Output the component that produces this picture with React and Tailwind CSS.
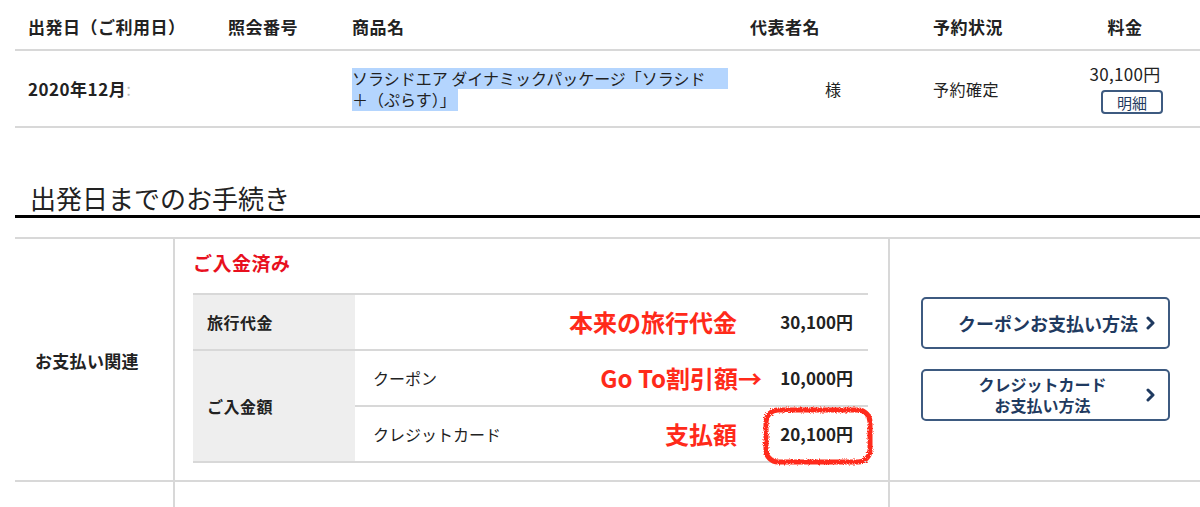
import React from 'react';

const font = { fontFamily: '"Noto Sans CJK JP", "Noto Sans", sans-serif' };

function Chevron() {
  return (
    <svg width="10" height="14" viewBox="0 0 10 14" className="shrink-0">
      <polyline points="2,2 7,7 2,12" fill="none" stroke="#1f3a60" strokeWidth="3" strokeLinecap="round" strokeLinejoin="round" />
    </svg>
  );
}

function Scribble() {
  return (
    <svg className="absolute left-[-3px] top-[-1px] pointer-events-none" width="112" height="60" viewBox="0 0 112 60">
      <defs>
        <filter id="rough">
          <feTurbulence type="fractalNoise" baseFrequency="1.2" numOctaves="3" result="n" />
          <feDisplacementMap in="SourceGraphic" in2="n" scale="4" />
        </filter>
      </defs>
      <rect x="4" y="4" width="104" height="52" rx="12" fill="none" stroke="#ff2a1a" strokeWidth="5" filter="url(#rough)" />
    </svg>
  );
}

export default function App() {
  return (
    <div className="w-[1200px] h-[507px] bg-white text-[#222] overflow-hidden" style={font}>
      {/* 予約一覧 */}
      <div className="ml-[15px]">
        <div className="flex items-center h-[51px] pt-[5px] border-b-2 border-[#d8d8d8] text-[17px] font-bold tracking-[0.5px]">
          <div className="w-[200px] pl-[13px]">出発日（ご利用日）</div>
          <div className="w-[124px] pl-[13px]">照会番号</div>
          <div className="w-[398px] pl-[13px]">商品名</div>
          <div className="w-[143px] pl-[13px]">代表者名</div>
          <div className="w-[180px] pl-[53px]">予約状況</div>
          <div className="w-[130px] text-center">料金</div>
        </div>
        <div className="flex items-center h-[77px] border-b-2 border-[#d8d8d8] text-[16px]">
          <div className="w-[200px] pl-[13px] font-bold text-[17px] tracking-[0.5px]">2020年12月<span className="text-[#bbb] font-normal">:</span></div>
          <div className="w-[124px]"></div>
          <div className="w-[398px] pl-[13px] leading-[21px]">
            <div className="w-[376px] bg-[#b4d5fe]">ソラシドエア ダイナミックパッケージ「ソラシド</div>
            <div><span className="bg-[#b4d5fe] pr-[2px]">＋（ぷらす）」</span></div>
          </div>
          <div className="w-[143px] pl-[88px]">様</div>
          <div className="w-[180px] pl-[53px] tracking-[0.5px]">予約確定</div>
          <div className="w-[130px] flex flex-col items-center">
            <div className="leading-[22px] text-[17px] tracking-[0.3px]">30,100円</div>
            <button className="mt-[5px] ml-[14px] w-[62px] h-[24px] border-2 border-[#3d5a80] rounded-[4px] text-[15px] text-[#1f3a60] leading-none">明細</button>
          </div>
        </div>
      </div>

      {/* 見出し */}
      <div className="ml-[15px] mt-[53px] border-b-[3px] border-black">
        <h2 className="pl-[15px] text-[26px] leading-[34px] text-[#222]">出発日までのお手続き</h2>
      </div>

      {/* お手続き */}
      <div className="ml-[15px] mt-[19px] border-t-2 border-[#d8d8d8]">
        <div className="flex h-[243px] border-b-2 border-[#d8d8d8]">
          <div className="w-[158px] flex items-center pl-[20px] pt-[2px] text-[17px] font-bold tracking-[0.3px]">お支払い関連</div>
          <div className="w-[715px] border-l-2 border-[#d8d8d8] pl-[18px] pr-[20px] pt-[12px]">
            <div className="text-[#e8101e] text-[19px] font-bold leading-[24px] tracking-[0.5px]">ご入金済み</div>
            <div className="mt-[18px] border-t-2 border-[#d8d8d8] border-b-2 text-[16px]">
              <div className="flex h-[56px] border-b-2 border-[#d8d8d8]">
                <div className="w-[162px] bg-[#eeeeee] flex items-center pl-[14px] font-bold tracking-[0.5px]">旅行代金</div>
                <div className="flex-1 flex items-center">
                  <div className="flex-1"></div>
                  <div className="text-[#ff2a1a] text-[24px] font-bold mr-[28px]">本来の旅行代金</div>
                  <div className="w-[103px] text-right pr-[15px] font-bold text-[17px]">30,100円</div>
                </div>
              </div>
              <div className="flex">
                <div className="w-[162px] bg-[#eeeeee] flex items-center pl-[14px] font-bold tracking-[0.5px]">ご入金額</div>
                <div className="flex-1">
                  <div className="flex h-[56px] items-center border-b-2 border-[#d8d8d8]">
                    <div className="flex-1 pl-[18px]">クーポン</div>
                    <div className="text-[#ff2a1a] text-[24px] font-bold mr-[3px]">Go To割引額→</div>
                    <div className="w-[103px] text-right pr-[15px] font-bold text-[17px]">10,000円</div>
                  </div>
                  <div className="flex h-[54px] items-center">
                    <div className="flex-1 pl-[18px]">クレジットカード</div>
                    <div className="text-[#ff2a1a] text-[24px] font-bold mr-[28px]">支払額</div>
                    <div className="relative w-[103px] h-full flex items-center justify-end pr-[15px] font-bold text-[17px]">
                      20,100円
                      <Scribble />
                    </div>
                  </div>
                </div>
              </div>
            </div>
          </div>
          <div className="flex-1 border-l-2 border-[#d8d8d8] pl-[31px] pt-[58px] flex flex-col gap-[20px]">
            <button className="w-[249px] h-[52px] border-2 border-[#3d5a80] rounded-[5px] flex items-center justify-end pr-[12px] gap-[8px] text-[#1f3a60] font-bold text-[18px]">
              <span>クーポンお支払い方法</span>
              <Chevron />
            </button>
            <button className="w-[249px] h-[52px] border-2 border-[#3d5a80] rounded-[5px] flex items-center pr-[12px] text-[#1f3a60] font-bold text-[16px] leading-[21px]">
              <span className="flex-1 text-center pl-[16px]">クレジットカード<br />お支払い方法</span>
              <Chevron />
            </button>
          </div>
        </div>
        <div className="flex h-[30px]">
          <div className="w-[158px]"></div>
          <div className="w-[715px] border-l-2 border-[#d8d8d8]"></div>
          <div className="flex-1 border-l-2 border-[#d8d8d8]"></div>
        </div>
      </div>
    </div>
  );
}
